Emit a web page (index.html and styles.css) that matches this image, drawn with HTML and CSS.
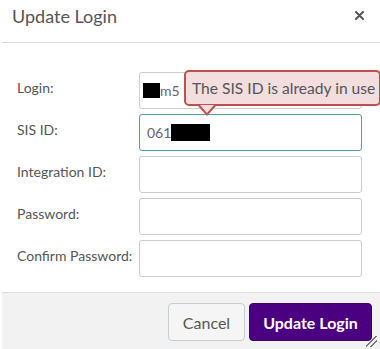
FILE: index.html
```html
<!DOCTYPE html>
<html lang="en">
<head>
    <meta charset="UTF-8">
    <meta name="viewport" content="width=device-width, initial-scale=1.0">
    <title>Update Login</title>
    <link rel="stylesheet" href="styles.css">
</head>
<body>
    <div class="dialog">
        <div class="dialog-header">
            <h1 class="dialog-title">Update Login</h1>
            <svg class="close" width="9" height="9" viewBox="0 0 9 9">
                <path d="M1 1 L8 8 M8 1 L1 8" stroke="#555" stroke-width="2" stroke-linecap="round"/>
            </svg>
        </div>

        <form class="dialog-body">
            <label class="field-label" for="login">Login:</label>
            <div class="field-input">
                <span class="redact redact-login"></span><span class="value">m5</span>
            </div>

            <label class="field-label" for="sis_id">SIS ID:</label>
            <div class="field-input focused">
                <span class="value">061</span><span class="redact redact-sis"></span>
            </div>

            <label class="field-label" for="integration_id">Integration ID:</label>
            <div class="field-input"></div>

            <label class="field-label" for="password">Password:</label>
            <div class="field-input"></div>

            <label class="field-label" for="confirm_password">Confirm Password:</label>
            <div class="field-input"></div>

            <div class="error-tip">The SIS ID is already in use</div>
        </form>

        <div class="dialog-footer">
            <button class="btn btn-cancel" type="button">Cancel</button>
            <button class="btn btn-primary" type="button">Update Login</button>
        </div>
        <span class="grip"></span>
    </div>
</body>
</html>
```

FILE: styles.css
```css
html, body {
    margin: 0;
    padding: 0;
    background: #fff;
}
body {
    font-family: Lato, "Open Sans", sans-serif;
    color: #555;
    overflow: hidden;
}
.dialog {
    position: relative;
    width: 378px;
    height: 349px;
    margin-left: 2px;
    display: flex;
    flex-direction: column;
}
.dialog-header {
    height: 42px;
    flex: none;
    border-bottom: 1px solid #d4d9dc;
    display: flex;
    align-items: center;
    justify-content: space-between;
    padding: 0 16px 0 10px;
}
.dialog-title {
    margin: 0;
    font-size: 18px;
    font-weight: normal;
    color: #555;
    position: relative;
    top: -5px;
}
.close {
    position: relative;
    top: -6px;
}
.dialog-body {
    position: relative;
    flex: 1;
    display: grid;
    grid-template-columns: 122px 223px;
    grid-auto-rows: 37px;
    row-gap: 5px;
    align-content: start;
    padding: 29px 0 0 15px;
    margin: 0;
}
.field-label {
    font-size: 14px;
    color: #555;
    align-self: center;
    position: relative;
    top: -3px;
}
.field-input {
    box-sizing: border-box;
    border: 1px solid #ccc;
    border-radius: 3px;
    display: flex;
    align-items: center;
    padding-left: 3px;
    font-size: 14px;
    color: #666;
}
.field-input.focused {
    border-color: #4aa0aa;
    padding-left: 7px;
}
.redact {
    display: inline-block;
    background: #000;
}
.redact-login {
    width: 17px;
    height: 15px;
}
.redact-sis {
    width: 39px;
    height: 17px;
}
.error-tip {
    position: absolute;
    left: 182px;
    top: 27px;
    width: 197px;
    height: 36px;
    box-sizing: border-box;
    background: #f2dede;
    border: 2px solid #c0504d;
    border-radius: 5px;
    font-size: 15.6px;
    color: #555;
    padding-left: 6px;
    line-height: 32px;
    white-space: nowrap;
}
.error-tip::before,
.error-tip::after {
    content: "";
    position: absolute;
    left: 12px;
    border-style: solid;
    border-color: transparent;
}
.error-tip::before {
    top: 34px;
    border-width: 10px 9px 0 9px;
    border-top-color: #c0504d;
}
.error-tip::after {
    top: 33px;
    left: 14px;
    border-width: 8px 7px 0 7px;
    border-top-color: #f2dede;
}
.dialog-footer {
    box-sizing: border-box;
    height: 57px;
    flex: none;
    border-top: 1px solid #d9dde0;
    background: #f2f2f2;
    display: flex;
    justify-content: flex-end;
    align-items: flex-start;
    gap: 4px;
    padding: 10px 8px 0 0;
}
.btn {
    height: 38px;
    border-radius: 4px;
    font-family: Lato, "Open Sans", sans-serif;
    font-size: 16px;
    cursor: pointer;
}
.btn-cancel {
    width: 77px;
    background: #f5f5f5;
    border: 1px solid #c7cdd1;
    color: #555;
}
.btn-primary {
    width: 123px;
    background: #4b0082;
    border: 1px solid #3e006b;
    color: #fff;
    font-weight: bold;
}
.grip {
    position: absolute;
    right: 3px;
    bottom: 2px;
    width: 11px;
    height: 11px;
    background: linear-gradient(135deg, transparent 45%, #777 45%, #777 52%, transparent 52%, transparent 68%, #777 68%, #777 75%, transparent 75%);
}
```
